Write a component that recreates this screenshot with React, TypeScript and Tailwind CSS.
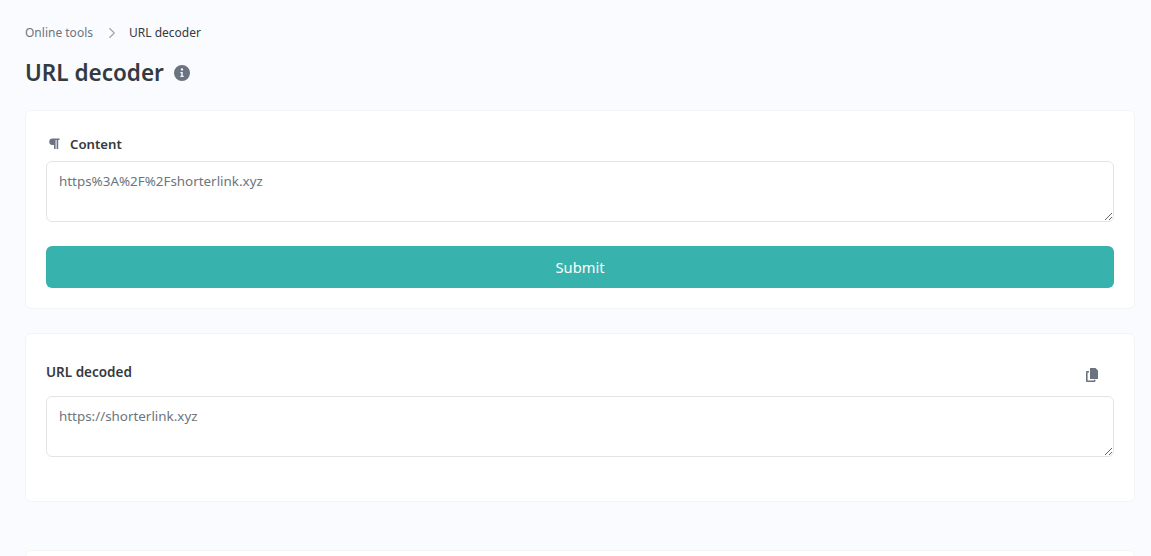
import { ChevronRight } from "lucide-react";

function InfoIcon() {
  return (
    <svg viewBox="0 0 16 16" className="w-4 h-4 text-[#6b7280]" fill="currentColor">
      <path
        fillRule="evenodd"
        d="M8 0a8 8 0 1 1 0 16A8 8 0 0 1 8 0zM8 3.2a1.2 1.2 0 1 0 0 2.4 1.2 1.2 0 0 0 0-2.4zM6.4 7v1.2h.9v2.6h-.9V12h3.2v-1.2h-.9V7z"
      />
    </svg>
  );
}

function PilcrowIcon() {
  return (
    <svg viewBox="0 0 12 12" className="w-3 h-3 text-[#6b7280]" fill="currentColor">
      <path d="M4.5 0.5H11.5V2H10.2V11H8.6V2H7.6V11H6V7H4.5a3.25 3.25 0 0 1 0-6.5z" />
    </svg>
  );
}

function CopyIcon() {
  return (
    <svg viewBox="0 0 14 14" className="w-[14px] h-[14px] text-[#6b7280]" fill="currentColor">
      <path d="M5 0h5.5L13 2.5V11H5z" />
      <path d="M1.8 3H4v1.6H2.6v7.8h6.2V11.8h1.6v1.2a1 1 0 0 1-1 1H1.8a.8.8 0 0 1-.8-.8V3.8A.8.8 0 0 1 1.8 3z" />
    </svg>
  );
}

function TextBox({ value }: { value: string }) {
  return (
    <textarea
      readOnly
      value={value}
      className="block w-full h-[61px] rounded-md border border-[#e2e5e8] bg-white px-3 py-[9px] text-[13.4px] leading-[21px] text-[#6c757d] outline-none"
    />
  );
}

export default function App() {
  return (
    <div className="h-[556px] overflow-hidden bg-[#fafbfe] pl-[25px] pr-[16px] pt-[23px] font-['Noto_Sans',sans-serif] text-[#343a40]">
      <nav className="flex items-center h-5 text-[12px] leading-5">
        <a className="text-[#6c757d]">Online tools</a>
        <ChevronRight className="w-[18px] h-[18px] ml-[10px] mr-[8px] text-[#9ca3af]" strokeWidth={1.5} />
        <span className="text-[#343a40]">URL decoder</span>
      </nav>

      <div className="flex items-center gap-[10px] mt-[12px] h-9">
        <h1 className="text-[22.5px] leading-9 font-semibold">URL decoder</h1>
        <InfoIcon />
      </div>

      <section className="mt-[19px] h-[199px] rounded-md border border-[#f3f4f6] bg-white px-5 pt-[23px]">
        <label className="flex items-center gap-[10px] h-5 px-[2px] text-[13.2px] leading-5 font-semibold">
          <PilcrowIcon />
          Content
        </label>
        <div className="mt-[7px]">
          <TextBox value="https%3A%2F%2Fshorterlink.xyz" />
        </div>
        <button className="mt-6 block w-full h-[42px] rounded-md bg-[#38b2ac] text-[14.7px] text-white">
          Submit
        </button>
      </section>

      <section className="mt-[24px] h-[169px] rounded-md border border-[#f3f4f6] bg-white px-5 pt-[28px]">
        <div className="flex items-center justify-between h-5">
          <span className="text-[13.5px] leading-5 font-semibold">URL decoded</span>
          <span className="mr-[15px] mt-[6px]">
            <CopyIcon />
          </span>
        </div>
        <div className="mt-[14px]">
          <TextBox value="https://shorterlink.xyz" />
        </div>
      </section>

      <section className="mt-[48px] h-40 rounded-md border border-[#f3f4f6] bg-white" />
    </div>
  );
}
